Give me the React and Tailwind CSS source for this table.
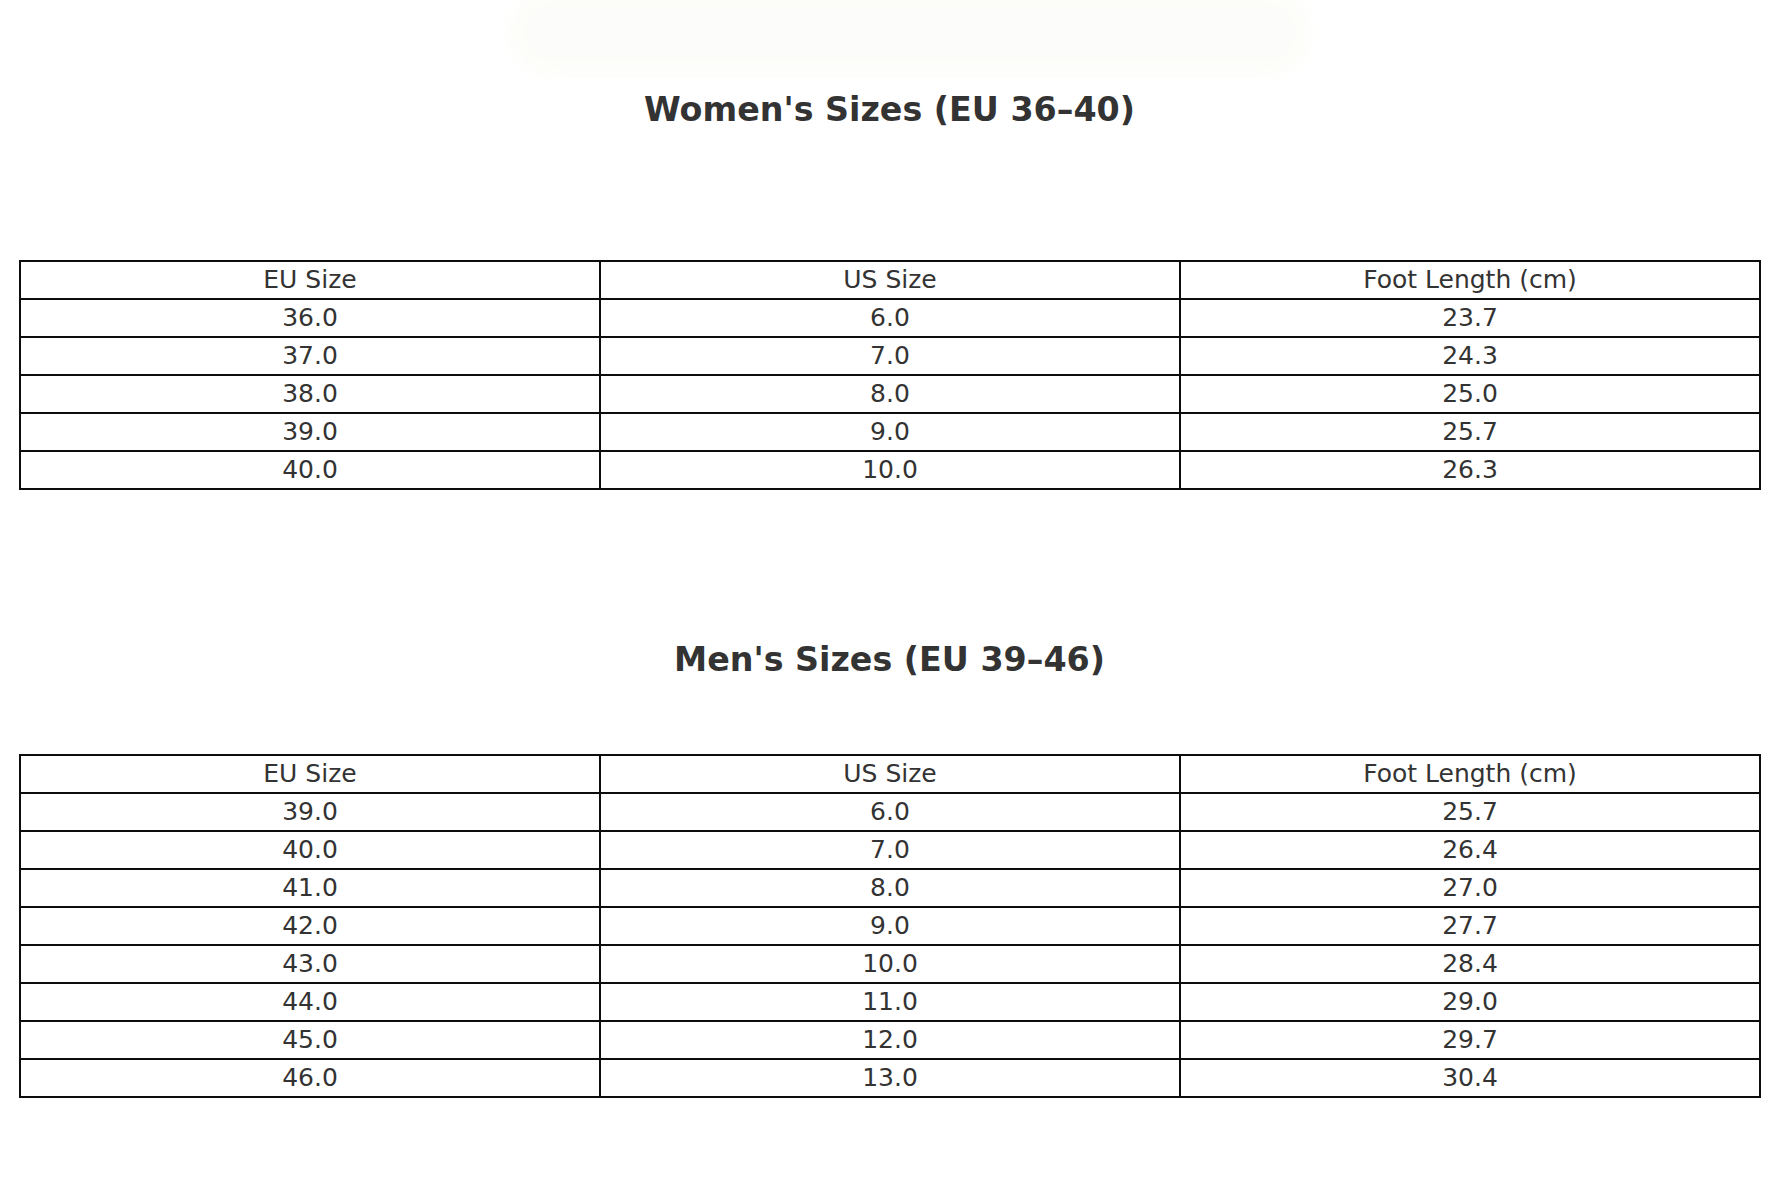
import React from "react";

const women = [
  ["36.0", "6.0", "23.7"],
  ["37.0", "7.0", "24.3"],
  ["38.0", "8.0", "25.0"],
  ["39.0", "9.0", "25.7"],
  ["40.0", "10.0", "26.3"],
];

const men = [
  ["39.0", "6.0", "25.7"],
  ["40.0", "7.0", "26.4"],
  ["41.0", "8.0", "27.0"],
  ["42.0", "9.0", "27.7"],
  ["43.0", "10.0", "28.4"],
  ["44.0", "11.0", "29.0"],
  ["45.0", "12.0", "29.7"],
  ["46.0", "13.0", "30.4"],
];

function SizeTable({ rows }) {
  const all = [["EU Size", "US Size", "Foot Length (cm)"], ...rows];
  return (
    <div className="ml-[19px] w-[1742px] bg-[#0d0d0d] p-[2px] grid grid-cols-3 gap-[2px]">
      {all.map((r, i) =>
        r.map((c, j) => (
          <div
            key={i + "-" + j}
            className="bg-white h-[36px] pb-[2px] flex items-center justify-center text-[25px] leading-none text-[#333333]"
          >
            {c}
          </div>
        ))
      )}
    </div>
  );
}

export default function App() {
  return (
    <div
      className="relative w-[1779px] h-[1185px] bg-white overflow-hidden"
      style={{ fontFamily: '"DejaVu Sans", sans-serif' }}
    >
      <div className="absolute left-[510px] top-[-10px] w-[800px] h-[85px] rounded-[40px] bg-[#fcfcf8] blur-[6px] opacity-70"></div>
      <div className="relative pt-[90px]">
        <h1 className="h-[40px] flex items-center justify-center text-[33.3px] font-bold text-[#333333] leading-none">
          Women's Sizes (EU 36–40)
        </h1>
        <div className="mt-[130px]">
          <SizeTable rows={women} />
        </div>
        <h1 className="mt-[150px] h-[40px] flex items-center justify-center text-[33.3px] font-bold text-[#333333] leading-none">
          Men's Sizes (EU 39–46)
        </h1>
        <div className="mt-[74px]">
          <SizeTable rows={men} />
        </div>
      </div>
    </div>
  );
}
